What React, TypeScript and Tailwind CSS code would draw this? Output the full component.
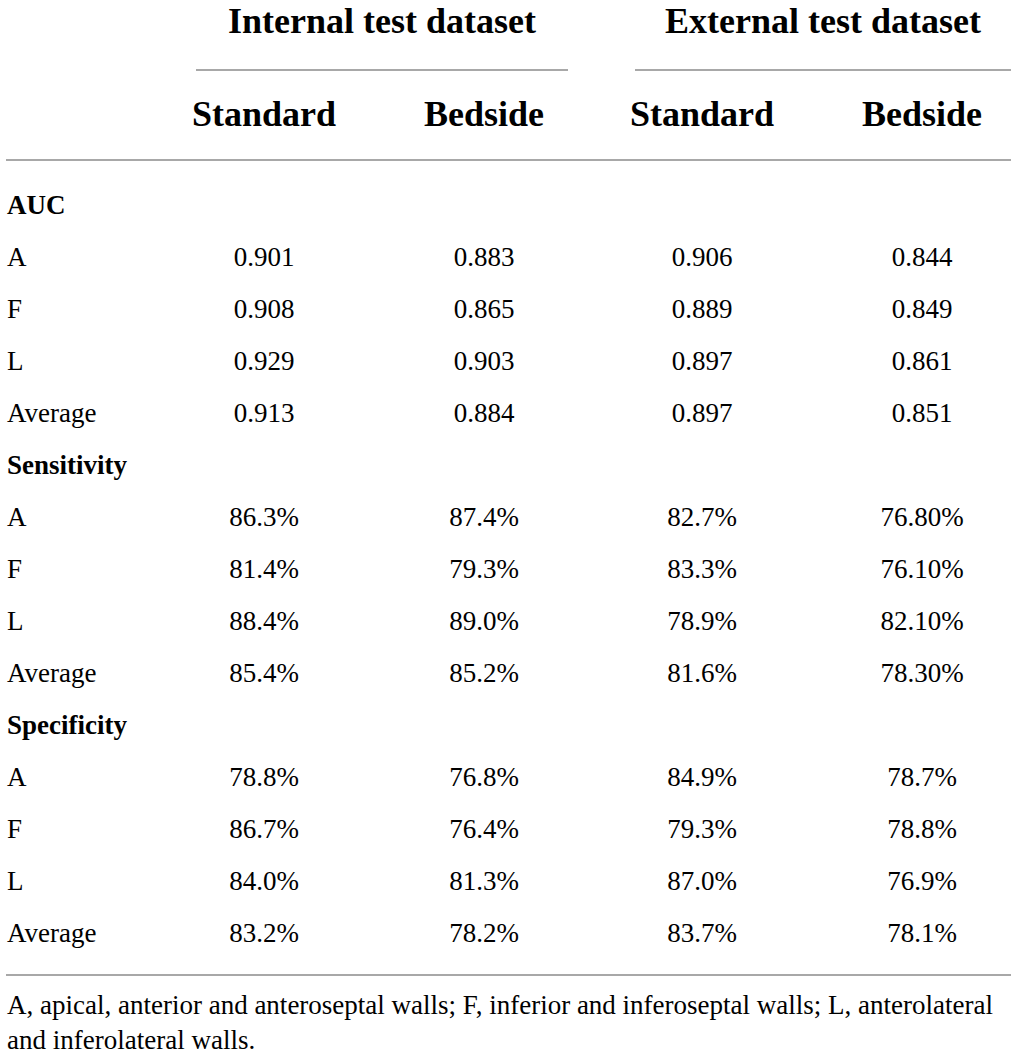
import React from 'react';

const cols = 'grid grid-cols-[125px_266px_174px_262px_178px]';

interface Row {
  label: string;
  values: string[];
}

interface Section {
  title: string;
  rows: Row[];
}

const sections: Section[] = [
  {
    title: 'AUC',
    rows: [
      { label: 'A', values: ['0.901', '0.883', '0.906', '0.844'] },
      { label: 'F', values: ['0.908', '0.865', '0.889', '0.849'] },
      { label: 'L', values: ['0.929', '0.903', '0.897', '0.861'] },
      { label: 'Average', values: ['0.913', '0.884', '0.897', '0.851'] }
    ]
  },
  {
    title: 'Sensitivity',
    rows: [
      { label: 'A', values: ['86.3%', '87.4%', '82.7%', '76.80%'] },
      { label: 'F', values: ['81.4%', '79.3%', '83.3%', '76.10%'] },
      { label: 'L', values: ['88.4%', '89.0%', '78.9%', '82.10%'] },
      { label: 'Average', values: ['85.4%', '85.2%', '81.6%', '78.30%'] }
    ]
  },
  {
    title: 'Specificity',
    rows: [
      { label: 'A', values: ['78.8%', '76.8%', '84.9%', '78.7%'] },
      { label: 'F', values: ['86.7%', '76.4%', '79.3%', '78.8%'] },
      { label: 'L', values: ['84.0%', '81.3%', '87.0%', '76.9%'] },
      { label: 'Average', values: ['83.2%', '78.2%', '83.7%', '78.1%'] }
    ]
  }
];

export default function App() {
  return (
    <div className="w-[1017px] min-h-[1062px] bg-white px-[6px] text-black font-['Liberation_Serif',serif]">
      {/* Group headers */}
      <div className={cols}>
        <div />
        <div className="col-span-2 pl-[65px] pr-[3px]">
          <div className="border-b-2 border-[#a8a8a8] pb-[26px] text-center text-[36px] font-bold leading-[43px]">
            Internal test dataset
          </div>
        </div>
        <div className="col-span-2 pl-[64px]">
          <div className="border-b-2 border-[#a8a8a8] pb-[26px] text-center text-[36px] font-bold leading-[43px]">
            External test dataset
          </div>
        </div>
      </div>

      {/* Column headers */}
      <div className={`${cols} border-b-2 border-[#a8a8a8] pt-[22px] pb-[23px] text-[36px] font-bold leading-[43px]`}>
        <div />
        <div className="text-center">Standard</div>
        <div className="text-center">Bedside</div>
        <div className="text-center">Standard</div>
        <div className="text-center">Bedside</div>
      </div>

      {/* Body */}
      <div className="mt-[18px] border-b-2 border-[#a8a8a8] pb-[15px] text-[27px]">
        {sections.map(section => (
          <div key={section.title}>
            <div className="flex h-[52px] items-center pl-[1px] font-bold">{section.title}</div>
            {section.rows.map(row => (
              <div key={row.label} className={`${cols} h-[52px] items-center`}>
                <div className="pl-[1px]">{row.label}</div>
                {row.values.map((v, i) => (
                  <div key={i} className="text-center">{v}</div>
                ))}
              </div>
            ))}
          </div>
        ))}
      </div>

      {/* Footnote */}
      <p className="mt-[12px] whitespace-nowrap pl-[1px] text-[27px] leading-[35px]">
        A, apical, anterior and anteroseptal walls; F, inferior and inferoseptal walls; L, anterolateral
        <br />
        and inferolateral walls.
      </p>
    </div>
  );
}
